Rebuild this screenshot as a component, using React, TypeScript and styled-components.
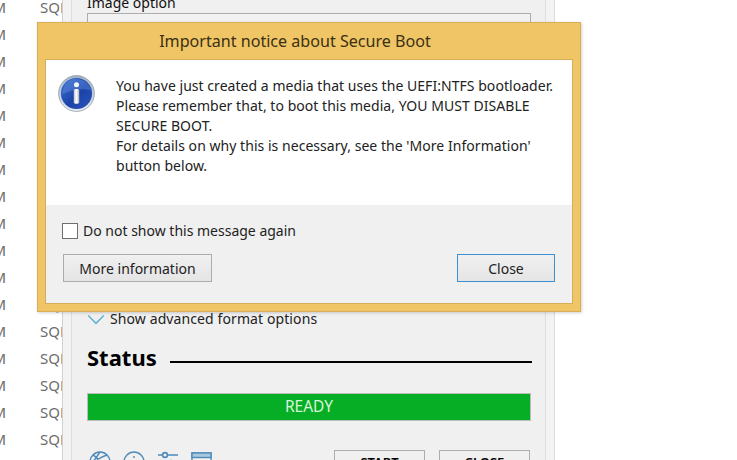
import React from 'react';
import styled, { createGlobalStyle } from 'styled-components';

const GlobalStyle = createGlobalStyle`
    html, body {
        margin: 0;
        padding: 0;
        width: 737px;
        height: 460px;
        overflow: hidden;
        background: #fff;
        font-family: "Noto Sans", "Open Sans", sans-serif;
    }
`
const Desktop = styled.div`
    position: relative;
    width: 737px;
    height: 460px;
    overflow: hidden;
    display: flex;
    align-items: flex-start;
`
const FileList = styled.ul`
    width: 62px;
    margin: -7px 0 0;
    padding: 0;
    list-style: none;
    flex-shrink: 0;
    overflow: hidden;
`
const FileRow = styled.li`
    height: 27px;
    display: flex;
    align-items: center;
    gap: 34px;
    color: #6d6d6d;
    font-size: 15px;
    white-space: nowrap;
`
const FileTime = styled.span`
    width: 6px;
    flex-shrink: 0;
    display: flex;
    justify-content: flex-end;
`
const RufusFrame = styled.div`
    width: 493px;
    height: 460px;
    box-sizing: border-box;
    flex-shrink: 0;
    background: #f3f3f3;
    border-left: 1px solid #d0d0d0;
    border-right: 1px solid #dcdcdc;
    padding: 0 8px;
`
const RufusBody = styled.div`
    height: 460px;
    box-sizing: border-box;
    background: #f0f0f0;
    border-left: 1px solid #dedede;
    border-right: 1px solid #dedede;
    padding: 0 15px;
    display: flex;
    flex-direction: column;
    overflow: hidden;
    color: #111;
    & > * { flex-shrink: 0; }
`
const FieldLabel = styled.div`
    font-size: 14px;
    line-height: 16px;
    margin-top: -5px;
    margin-bottom: 2px;
`
const Field = styled.div`
    width: 444px;
    height: 26px;
    box-sizing: border-box;
    background: #f2f2f2;
    border: 1px solid #adadad;
`
const AdvancedToggle = styled.div`
    display: flex;
    align-items: center;
    gap: 5px;
    margin-top: 272px;
    font-size: 14px;
    letter-spacing: 0.1px;
    line-height: 16px;
    color: #222;
`
const StatusRow = styled.div`
    display: flex;
    align-items: center;
    gap: 13px;
    margin-top: 15px;
    width: 445px;
`
const StatusTitle = styled.h2`
    margin: 0;
    font-size: 22px;
    line-height: 30px;
    font-weight: 700;
    color: #000;
`
const StatusLine = styled.div`
    flex: 1;
    height: 2px;
    margin-top: 9px;
    background: #000;
`
const ProgressBar = styled.div`
    width: 444px;
    height: 28px;
    box-sizing: border-box;
    margin-top: 21px;
    background: #06ae26;
    border: 1px solid #bcbcbc;
    color: #d8f5d8;
    font-size: 15.5px;
    line-height: 25px;
    text-align: center;
`
const Footer = styled.div`
    display: flex;
    align-items: flex-start;
    margin-top: 29px;
    width: 443px;
`
const ToolIcons = styled.div`
    display: flex;
    gap: 10px;
    margin-left: 1px;
    margin-right: auto;
`
const ActionButton = styled.button`
    width: 91px;
    height: 24px;
    box-sizing: border-box;
    margin-left: 14px;
    padding: 0;
    background: #f0f0f0;
    border: 1px solid #adadad;
    color: #000;
    font-family: inherit;
    font-size: 13px;
    font-weight: 600;
    line-height: 14px;
    &:first-of-type { margin-left: 0; }
`
const Dialog = styled.div`
    position: absolute;
    left: 37px;
    top: 22px;
    width: 544px;
    height: 290px;
    box-sizing: border-box;
    background: #efc566;
    border: 1px solid #d9ae58;
    box-shadow: 1px 1px 3px rgba(0, 0, 0, 0.18);
    padding: 0 7px 7px;
    display: flex;
    flex-direction: column;
`
const DialogTitle = styled.div`
    height: 36px;
    flex-shrink: 0;
    box-sizing: border-box;
    padding-right: 28px;
    text-align: center;
    font-size: 16.1px;
    line-height: 36px;
    color: #3a3014;
`
const DialogInner = styled.div`
    flex: 1;
    display: flex;
    flex-direction: column;
    border: 1px solid #d6ae5a;
    min-height: 0;
`
const Message = styled.div`
    height: 145px;
    flex-shrink: 0;
    box-sizing: border-box;
    background: #fff;
    display: flex;
    padding: 15px 0 0 12px;
    gap: 21px;
`
const MessageText = styled.p`
    margin: 0;
    padding-top: 1px;
    font-size: 14px;
    letter-spacing: 0.04px;
    line-height: 20px;
    color: #222;
    white-space: pre-line;
`
const DialogActions = styled.div`
    flex: 1;
    background: #f0f0f0;
    display: flex;
    flex-direction: column;
    padding: 16px 17px 0 16px;
`
const CheckLabel = styled.label`
    display: flex;
    align-items: center;
    gap: 5px;
    font-size: 14px;
    line-height: 20px;
    color: #222;
`
const CheckBox = styled.span`
    width: 14px;
    height: 14px;
    background: #fff;
    border: 1px solid #6e6e6e;
    display: block;
`
const ButtonRow = styled.div`
    display: flex;
    justify-content: space-between;
    margin-top: 13px;
    margin-left: 1px;
`
const DialogButton = styled.button<{ $wide?: boolean; $focused?: boolean }>`
    width: ${p => (p.$wide ? '149px' : '98px')};
    height: 28px;
    box-sizing: border-box;
    padding: 0;
    background: linear-gradient(#f0f0f0, #e5e5e5);
    border: 1px solid ${p => (p.$focused ? '#3c8fd0' : '#acacac')};
    color: #222;
    font-family: inherit;
    font-size: 14px;
`

const InfoIcon = () => (
    <svg width="37" height="37" viewBox="0 0 38 38" style={{ flexShrink: 0 }}>
        <defs>
            <linearGradient id="infoRing" x1="0" y1="0" x2="0" y2="1">
                <stop offset="0" stopColor="#9fb1c6" />
                <stop offset="1" stopColor="#e8edf2" />
            </linearGradient>
            <linearGradient id="infoFill" x1="0" y1="0" x2="1" y2="1">
                <stop offset="0" stopColor="#3f72d2" />
                <stop offset="0.55" stopColor="#1c43a8" />
                <stop offset="1" stopColor="#2a55bb" />
            </linearGradient>
            <linearGradient id="infoStem" x1="0" y1="0" x2="1" y2="0">
                <stop offset="0" stopColor="#c0c6cf" />
                <stop offset="0.5" stopColor="#ffffff" />
                <stop offset="1" stopColor="#aab2bf" />
            </linearGradient>
        </defs>
        <circle cx="19" cy="19" r="18.4" fill="url(#infoRing)" stroke="#8e9aa8" strokeWidth="0.8" />
        <circle cx="19" cy="19" r="16" fill="url(#infoFill)" />
        <path d="M4 20 Q19 12 34 16 Q33 6 19 3.5 Q6 5 4 20Z" fill="#6f9be6" opacity="0.35" />
        <circle cx="19" cy="10" r="2.6" fill="#f4f6f8" />
        <rect x="16.2" y="14.5" width="5.6" height="15" rx="1.4" fill="url(#infoStem)" />
    </svg>
)

const Chevron = () => (
    <svg width="18" height="11" viewBox="0 0 18 11">
        <path d="M1.2 1.5 L9 9.4 L16.8 1.5" fill="none" stroke="#63b4d6" strokeWidth="1.6" />
    </svg>
)

const GlobeIcon = () => (
    <svg width="24" height="24" viewBox="0 0 24 24" fill="none" stroke="#4f8ab8" strokeWidth="1.4">
        <circle cx="12" cy="12" r="10" />
        <path d="M5 5 Q13 9 12 22 M12 2 Q6 11 3 14 M19 5 Q12 7 3 14" />
    </svg>
)

const AboutIcon = () => (
    <svg width="24" height="24" viewBox="0 0 24 24" fill="none" stroke="#4f8ab8" strokeWidth="1.4">
        <circle cx="12" cy="12" r="10" />
        <path d="M12 6 V8 M12 10 V18" />
    </svg>
)

const SlidersIcon = () => (
    <svg width="24" height="24" viewBox="0 0 24 24" fill="none" stroke="#4f8ab8" strokeWidth="1.6">
        <path d="M2 5 H22 M2 13 H22" />
        <circle cx="9" cy="5" r="2.4" fill="#f0f0f0" />
        <circle cx="15" cy="13" r="2.4" fill="#f0f0f0" />
    </svg>
)

const LogIcon = () => (
    <svg width="24" height="24" viewBox="0 0 24 24" fill="none" stroke="#4f8ab8" strokeWidth="1.4">
        <rect x="2" y="3" width="19" height="20" />
        <rect x="2" y="3" width="19" height="4.5" fill="#a9c8de" />
    </svg>
)

const files = Array.from({ length: 18 });
const message = `You have just created a media that uses the UEFI:NTFS bootloader.
Please remember that, to boot this media, YOU MUST DISABLE
SECURE BOOT.
For details on why this is necessary, see the 'More Information'
button below.`;

const App = () => {
    return (
        <Desktop>
            <GlobalStyle />
            <FileList>
                {files.map((_, idx) => (
                    <FileRow key={idx}>
                        <FileTime>PM</FileTime>
                        <span>SQL Server</span>
                    </FileRow>
                ))}
            </FileList>
            <RufusFrame>
                <RufusBody>
                    <FieldLabel>Image option</FieldLabel>
                    <Field />
                    <AdvancedToggle>
                        <Chevron />
                        Show advanced format options
                    </AdvancedToggle>
                    <StatusRow>
                        <StatusTitle>Status</StatusTitle>
                        <StatusLine />
                    </StatusRow>
                    <ProgressBar>READY</ProgressBar>
                    <Footer>
                        <ToolIcons>
                            <GlobeIcon />
                            <AboutIcon />
                            <SlidersIcon />
                            <LogIcon />
                        </ToolIcons>
                        <ActionButton>START</ActionButton>
                        <ActionButton>CLOSE</ActionButton>
                    </Footer>
                </RufusBody>
            </RufusFrame>
            <Dialog>
                <DialogTitle>Important notice about Secure Boot</DialogTitle>
                <DialogInner>
                    <Message>
                        <InfoIcon />
                        <MessageText>{message}</MessageText>
                    </Message>
                    <DialogActions>
                        <CheckLabel>
                            <CheckBox />
                            Do not show this message again
                        </CheckLabel>
                        <ButtonRow>
                            <DialogButton $wide>More information</DialogButton>
                            <DialogButton $focused>Close</DialogButton>
                        </ButtonRow>
                    </DialogActions>
                </DialogInner>
            </Dialog>
        </Desktop>
    )
}

export default App
